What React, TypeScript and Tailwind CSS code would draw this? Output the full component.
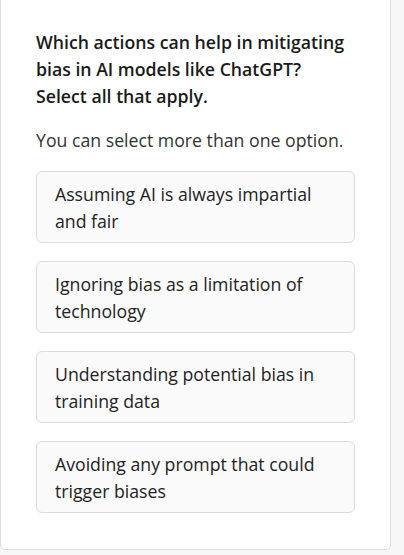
export default function App() {
  const options = [
    "Assuming AI is always impartial and fair",
    "Ignoring bias as a limitation of technology",
    "Understanding potential bias in training data",
    "Avoiding any prompt that could trigger biases",
  ];
  return (
    <div className="w-[404px] h-[555px] bg-[#f7f7f7] overflow-hidden" style={{ fontFamily: '"Open Sans", sans-serif' }}>
      <div className="w-[391px] h-[550px] bg-white border-x border-b border-[#dcdcdc] rounded-b-[5px] pl-[35px] pr-[36px] pt-[29px]">
        <h2 className="text-[17.7px] leading-[27px] font-semibold text-[#1a1a1a] w-[318px]">
          Which actions can help in mitigating bias in AI models like ChatGPT?
          <br />
          Select all that apply.
        </h2>
        <p className="mt-[17px] text-[17.7px] leading-[27px] text-[#333]">You can select more than one option.</p>
        <div className="mt-[17px] flex flex-col gap-[18px] w-[319px]">
          {options.map((o) => (
            <div key={o} className="h-[72px] bg-[#fafafa] border border-[#dcdcdc] rounded-[6px] pl-[18px] pr-[30px] pt-[9px] text-[17.7px] leading-[27px] text-[#222]">
              {o}
            </div>
          ))}
        </div>
      </div>
    </div>
  );
}
